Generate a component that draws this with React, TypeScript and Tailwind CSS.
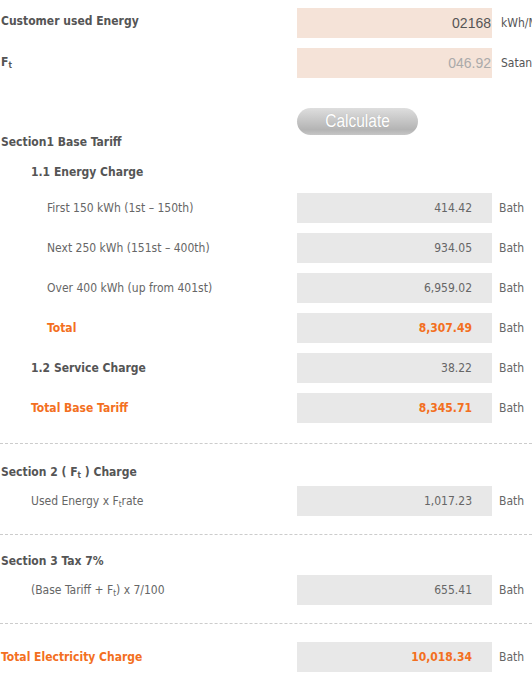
import React from "react";

const Ft = () => (
  <span>
    F<sub className="text-[8px] align-baseline relative top-[2px]">t</sub>
  </span>
);

type RowProps = {
  label: React.ReactNode;
  value: string;
  labelClass?: string;
  valueClass?: string;
};

const Row = ({ label, value, labelClass = "", valueClass = "" }: RowProps) => (
  <div className="grid grid-cols-[297px_195px_1fr] items-center h-[30px]">
    <div className={labelClass}>{label}</div>
    <div className={`h-[30px] bg-[#e8e8e8] flex items-center justify-end pr-[20px] ${valueClass}`}>{value}</div>
    <div className="pl-[7px] text-[#666]">Bath</div>
  </div>
);

const Dash = ({ cls }: { cls: string }) => <div className={`border-t border-dashed border-[#cccccc] ${cls}`} />;

export default function App() {
  return (
    <div
      className="w-[532px] h-[681px] overflow-hidden bg-white text-[12px] leading-[14px] text-[#666]"
      style={{ fontFamily: '"DejaVu Sans Condensed", "Liberation Sans", sans-serif' }}
    >
      <div className="pt-[8px]">
        <div className="grid grid-cols-[297px_195px_1fr] h-[30px]">
          <div className="pl-[1px] pt-[6px] font-bold text-[#555]">Customer used Energy</div>
          <div
            className="h-[30px] bg-[#f5e3d8] flex items-center justify-end pr-[1px] text-[14px] text-[#555]"
            style={{ fontFamily: '"Liberation Sans", sans-serif' }}
          >
            02168
          </div>
          <div className="pl-[9px] pt-[8px] whitespace-nowrap text-[#555]">kWh/Month</div>
        </div>
        <div className="grid grid-cols-[297px_195px_1fr] h-[30px] mt-[10px]">
          <div className="pl-[1px] pt-[7px] font-bold text-[#555]">
            <Ft />
          </div>
          <div
            className="h-[30px] bg-[#f5e3d8] flex items-center justify-end pr-[1px] text-[14px] text-[#aaa]"
            style={{ fontFamily: '"Liberation Sans", sans-serif' }}
          >
            046.92
          </div>
          <div className="pl-[9px] pt-[8px] whitespace-nowrap text-[#555]">Satang/kWh</div>
        </div>
        <div className="mt-[30px] pl-[297px]">
          <button
            className="w-[121px] h-[27px] rounded-full text-white text-[18px] leading-[27px] flex items-center justify-center"
            style={{
              fontFamily: '"Liberation Sans", sans-serif',
              background: "linear-gradient(to bottom, #dedede 0%, #c4c4c4 50%, #b4b4b4 80%, #c6c6c6 100%)",
              textShadow: "0 0 1px rgba(0,0,0,0.15)",
            }}
          >
            <span className="inline-block scale-x-[0.86]">Calculate</span>
          </button>
        </div>
        <div className="pl-[1px] font-bold text-[#555]">Section1 Base Tariff</div>
        <div className="pl-[31px] mt-[16px] font-bold text-[#555]">1.1 Energy Charge</div>
        <div className="mt-[14px] flex flex-col gap-[10px]">
          <Row label="First 150 kWh (1st – 150th)" value="414.42" labelClass="pl-[47px]" />
          <Row label="Next 250 kWh (151st – 400th)" value="934.05" labelClass="pl-[47px]" />
          <Row label="Over 400 kWh (up from 401st)" value="6,959.02" labelClass="pl-[47px]" />
          <Row
            label="Total"
            value="8,307.49"
            labelClass="pl-[47px] font-bold text-[#f36f21]"
            valueClass="font-bold text-[#f36f21]"
          />
          <Row label="1.2 Service Charge" value="38.22" labelClass="pl-[31px] font-bold text-[#555]" />
          <Row
            label="Total Base Tariff"
            value="8,345.71"
            labelClass="pl-[31px] font-bold text-[#f36f21]"
            valueClass="font-bold text-[#f36f21]"
          />
        </div>
        <Dash cls="mt-[20px]" />
        <div className="pl-[1px] mt-[21px] font-bold text-[#555]">
          Section 2 ( <Ft /> ) Charge
        </div>
        <div className="mt-[7px]">
          <Row
            label={
              <span>
                Used Energy x <Ft />rate
              </span>
            }
            value="1,017.23"
            labelClass="pl-[31px]"
          />
        </div>
        <Dash cls="mt-[18px]" />
        <div className="pl-[1px] mt-[19px] font-bold text-[#555]">Section 3 Tax 7%</div>
        <div className="mt-[7px]">
          <Row
            label={
              <span>
                (Base Tariff + <Ft />) x 7/100
              </span>
            }
            value="655.41"
            labelClass="pl-[31px]"
          />
        </div>
        <Dash cls="mt-[18px]" />
        <div className="mt-[18px]">
          <Row
            label="Total Electricity Charge"
            value="10,018.34"
            labelClass="pl-[1px] font-bold text-[#f36f21]"
            valueClass="font-bold text-[#f36f21]"
          />
        </div>
      </div>
    </div>
  );
}
